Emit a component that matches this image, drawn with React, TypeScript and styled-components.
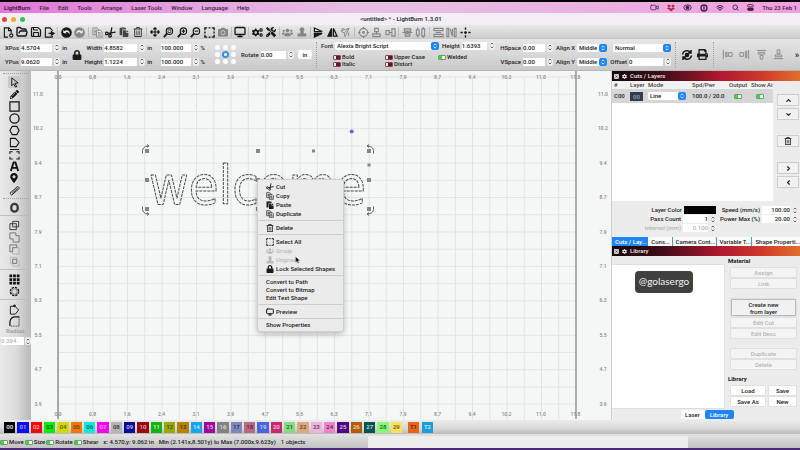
import React, { ReactNode } from "react";
import styled, { createGlobalStyle, css } from "styled-components";
import { ChevronDown, ChevronUp, ChevronLeft, ChevronRight, FolderOpen, Monitor, Save, Search, Video, Wifi } from "lucide-react";
import { FaArrowsAlt, FaCamera, FaCog, FaCogs, FaDropbox, FaLock, FaMapMarkerAlt, FaPaste, FaPencilAlt, FaPrint, FaRegTrashAlt, FaTools, FaUsers } from "react-icons/fa";

const Global = createGlobalStyle`
  * { box-sizing: border-box; }
  html, body, #root { height: 100%; }
  body { margin: 0; background: #e4e4e4; color: #1c1c1c; font: 500 6px/8px Roboto, "Liberation Sans", sans-serif; overflow: hidden; }
  button, input, select { font: inherit; color: inherit; margin: 0; padding: 0; border: 0; min-width: 0; }
  svg { display: block; flex: none; }
`;

const Window = styled.div`
  min-height: 100vh;
  display: flex;
  flex-direction: column;
`;
const MenuBar = styled.nav`
  height: 13px;
  border-top: 2px solid #000;
  padding-left: 4px;
  display: flex;
  align-items: center;
  gap: 9px;
  white-space: nowrap;
  overflow: hidden;
  color: #43203f;
  background: linear-gradient(90deg, #e174d8, #e4a5e0 25%, #e6c0e4 45%, #e8b3e2 70%, #f29fdf);
`;
const MenuLink = styled.button<{ $strong?: boolean }>`
  background: none;
  font-weight: ${(p) => (p.$strong ? 700 : 500)};
`;
const Tray = styled.div`
  margin-left: auto;
  padding-right: 3px;
  display: flex;
  align-items: center;
  gap: 8px;
`;
const TitleBar = styled.header`
  height: 12px;
  display: grid;
  grid-template-columns: 1fr auto 1fr;
  align-items: center;
  padding-left: 2px;
  background: #f3eef5;
  color: #3c3a3e;
  font-weight: 700;
`;
const Lights = styled.div`
  display: flex;
  gap: 4px;
`;
const Light = styled.i<{ $c: string }>`
  width: 5px;
  height: 5px;
  border-radius: 50%;
  background: ${(p) => p.$c};
`;
const ToolBar = styled.div`
  height: 14px;
  background: linear-gradient(#e9e9e9, #d2d2d2 80%, #c6c6c6);
`;
const ToolRow = styled.div`
  width: 59%;
  height: 14px;
  padding-left: 2px;
  display: flex;
  align-items: center;
  justify-content: space-between;
`;
const IconButton = styled.button<{ $dim?: boolean }>`
  width: 13px;
  height: 12px;
  display: grid;
  place-items: center;
  background: none;
  color: ${(p) => (p.$dim ? "#858585" : "#161616")};
`;
const Rule = styled.i`
  width: 1px;
  height: 10px;
  margin: 0 1px;
  background: #bdbdbd;
`;

const Props = styled.div`
  height: 32px;
  display: flex;
  align-items: center;
  padding: 0 1px 0 5px;
  background: linear-gradient(#e6e6e6, #d6d6d6 55%, #c9c9c9);
  border-bottom: 1px solid #b6b6b6;
  white-space: nowrap;
`;
const Pair = styled.div<{ $ml?: number; $w?: number }>`
  display: flex;
  flex-direction: column;
  gap: 6px;
  margin-left: ${(p) => p.$ml ?? 0}px;
  width: ${(p) => (p.$w ? p.$w + "px" : "auto")};
`;
const Field = styled.label<{ $end?: boolean }>`
  display: flex;
  align-items: center;
  justify-content: ${(p) => (p.$end ? "flex-end" : "flex-start")};
  gap: 2px;
  height: 8px;
`;
const Box = styled.input<{ $w: number; $right?: boolean }>`
  width: ${(p) => p.$w}px;
  height: 8px;
  line-height: 8px;
  background: #fff;
  text-align: ${(p) => (p.$right ? "right" : "left")};
  &:disabled { color: #b5b5b5; }
`;
const Spin = styled.span`
  width: 6px;
  height: 8px;
  border-radius: 2px;
  background: #efefef;
  display: grid;
  place-items: center;
`;
const Picker = styled.span<{ $w: number }>`
  position: relative;
  display: flex;
  width: ${(p) => p.$w}px;
  height: 8px;
  background: #fff;
  border-radius: 2px;
  select {
    appearance: none;
    background: none;
    flex: 1;
    padding: 0 8px 0 2px;
    outline: none;
  }
  svg {
    position: absolute;
    right: 0;
    top: 0;
    pointer-events: none;
  }
`;
const Anchors = styled.fieldset`
  margin: 0 0 0 10px;
  padding: 0;
  border: 0;
  display: grid;
  grid-template-columns: repeat(3, 6px);
  gap: 2px 2px;
`;
const Anchor = styled.input`
  appearance: none;
  width: 5px;
  height: 5px;
  border-radius: 50%;
  background: #fbfbfb;
  &:checked { background: #fff; border: 2px solid #2f94dd; width: 7px; height: 7px; margin: -1px; }
`;
const UnitButton = styled.button`
  width: 14px;
  height: 9px;
  margin-left: 4px;
  border-radius: 2px;
  background: #fdfdfd;
`;
const Dots = styled.i<{ $row?: boolean; $m?: number }>`
  ${(p) =>
    p.$row
      ? css`width: 26px; height: 1px; border-top: 1px dotted #a2a2a2;`
      : css`width: 1px; height: 26px; border-left: 1px dotted #a2a2a2;`}
  margin: ${(p) => (p.$row ? "2px 0" : `0 ${p.$m ?? 1}px`)};
  flex: none;
`;
const FontGroup = styled.div`
  width: 176px;
  display: grid;
  row-gap: 4px;
`;
const FontLine = styled.div`
  display: flex;
  align-items: center;
  gap: 3px;
`;
const Checks = styled.div`
  display: grid;
  grid-template-columns: 52px 53px 40px;
  padding-left: 12px;
`;
const ToggleLabel = styled.label`
  display: flex;
  align-items: center;
  gap: 1px;
  height: 7px;
`;
const Toggle = styled.input`
  appearance: none;
  width: 8px;
  height: 5px;
  border: 1px solid #74505a;
  border-radius: 1px;
  background: linear-gradient(90deg, #f3e9eb 38%, #7c0a24 38%);
  &:checked {
    border-color: #6f9a73;
    background: linear-gradient(90deg, #35dc35 58%, #f4fff4 58%);
  }
`;
const More = styled.button`
  margin-left: auto;
  background: none;
  font-size: 9px;
`;

const Body = styled.main`
  flex: 1;
  min-height: 0;
  display: grid;
  grid-template-columns: 31px minmax(0, 1fr) 189px;
`;
const SideTools = styled.aside`
  display: flex;
  flex-direction: column;
  align-items: center;
  background: linear-gradient(90deg, #e9e9e9, #dcdcdc 50%, #b9b9b9);
`;
const SideButton = styled.button<{ $on?: boolean; $dim?: boolean }>`
  width: 13px;
  height: 12px;
  margin-right: 3px;
  flex: none;
  display: grid;
  place-items: center;
  background: ${(p) => (p.$on ? "#c9c9c9" : "none")};
  color: ${(p) => (p.$dim ? "#6e6e6e" : "#111")};
`;
const SideRule = styled.i`
  width: 100%;
  height: 1px;
  margin: 2px 0 3px;
  background: #bdbdbd;
  flex: none;
`;
const Radius = styled.label`
  display: grid;
  gap: 2px;
  width: 100%;
  padding-left: 1px;
  color: #9b9b9b;
  text-align: center;
`;
const RadiusRow = styled.span`
  display: flex;
  gap: 1px;
`;
const CanvasArea = styled.section`
  position: relative;
  background: #f5f7f6;
  overflow: hidden;
`;
const Popup = styled.menu`
  position: absolute;
  left: 227px;
  top: 109px;
  width: 85px;
  margin: 0;
  padding: 2px 0;
  background: #ebebeb;
  border-radius: 2px;
  box-shadow: 0 0 0 1px #cfcfcf, 0 2px 6px #0005;
`;
const PopItem = styled.button<{ $plain?: boolean }>`
  width: 100%;
  height: ${(p) => (p.$plain ? 8 : 9)}px;
  padding-left: 8px;
  display: flex;
  align-items: center;
  gap: 2px;
  background: none;
  white-space: nowrap;
  &:disabled { color: #b9b9b9; }
`;
const PopRule = styled.hr`
  height: 1px;
  margin: 2px 0;
  border: 0;
  background: #cdcdcd;
`;
const Pointer = styled.div`
  position: absolute;
  left: 264px;
  top: 185px;
`;

const Dock = styled.aside`
  display: flex;
  flex-direction: column;
  background: #ececec;
  border-left: 1px solid #cfcfcf;
  min-width: 0;
`;
const DockTitle = styled.h2`
  margin: 0;
  height: 10px;
  padding-left: 2px;
  display: flex;
  align-items: center;
  gap: 3px;
  flex: none;
  color: #f3e6e6;
  font: inherit;
  background: linear-gradient(90deg, #15090c, #3a0c16 25%, #b0192f 58%, #cf3a2b 80%, #e0702c);
`;
const Cuts = styled.div`
  display: grid;
  grid-template-columns: 1fr 22px;
  gap: 4px;
  height: 120px;
  padding-right: 1px;
`;
const TableWrap = styled.div`
  background: #fff;
  overflow: hidden;
`;
const Table = styled.table`
  width: 100%;
  table-layout: fixed;
  border-collapse: collapse;
  th { height: 8px; padding: 0; text-align: left; font-weight: 500; background: #f2f2f2; color: #444; white-space: nowrap; }
  td { height: 14px; padding: 0; background: #d6d6d6; white-space: nowrap; }
  td input { margin-left: 5px; vertical-align: middle; }
  th:first-child, td:first-child { padding-left: 2px; }
`;
const LayerChip = styled.span`
  display: block;
  width: 13px;
  height: 9px;
  line-height: 9px;
  text-align: center;
  background: #323e4c;
  color: #93a0ad;
`;
const Arrows = styled.div`
  padding-top: 13px;
  display: flex;
  flex-direction: column;
  gap: 2px;
`;
const ArrowButton = styled.button<{ $gap?: boolean }>`
  height: 12px;
  margin-top: ${(p) => (p.$gap ? 13 : 0)}px;
  display: grid;
  place-items: center;
  background: #f1f1f1;
  border: 1px solid #cdcdcd;
`;
const Settings = styled.div`
  display: grid;
  grid-template-columns: 104px 1fr;
  gap: 1px 0;
  padding: 5px 2px 5px 0;
`;
const Swatch = styled.span`
  width: 32px;
  height: 8px;
  background: #000;
`;
const Muted = styled.span`
  color: #b5b5b5;
`;
const Tabs = styled.div`
  display: flex;
  height: 9px;
  overflow: hidden;
  flex: none;
  white-space: nowrap;
`;
const Tab = styled.button<{ $on?: boolean }>`
  padding: 0 3px;
  flex: auto;
  background: ${(p) => (p.$on ? "#1d86f2" : "#fafafa")};
  color: ${(p) => (p.$on ? "#fff" : "#222")};
  border-right: 1px solid ${(p) => (p.$on ? "#1d86f2" : "#4a98dc")};
  &:last-child { border: 0; }
`;
const LibraryBody = styled.div`
  flex: 1;
  display: grid;
  grid-template-columns: 113px 1fr;
  gap: 6px;
  padding-right: 4px;
`;
const Shelf = styled.div`
  margin-top: 8px;
  padding: 6px 0 0 23px;
  background: #fff;
  border: 1px solid #dedede;
  border-left: 0;
`;
const Handle = styled.div`
  width: 58px;
  height: 22px;
  line-height: 21px;
  text-align: center;
  border-radius: 4px;
  background: #404040;
  color: #f2f2f2;
  font-family: Lato, sans-serif;
  font-size: 10px;
  font-weight: 400;
`;
const Actions = styled.div`
  display: flex;
  flex-direction: column;
  gap: 2px;
`;
const Heading = styled.h3<{ $gap?: boolean }>`
  margin: ${(p) => (p.$gap ? 4 : 1)}px 0 1px -3px;
  font: inherit;
  font-weight: 700;
`;
const Action = styled.button<{ $gap?: boolean; $tall?: boolean }>`
  height: ${(p) => (p.$tall ? 17 : 9)}px;
  line-height: 7px;
  margin-top: ${(p) => (p.$gap ? 9 : 0)}px;
  border-radius: 1px;
  background: #fefefe;
  box-shadow: 0 0 0 1px #0000000d;
  ${(p) => p.$tall && css`background: #f1f1f1; border: 1px solid #b9b9b9;`}
  &:disabled { color: #b4b4b4; background: #f4f4f4; }
`;
const ActionPair = styled.div`
  display: grid;
  grid-template-columns: 34px 1fr;
  gap: 4px;
`;
const BottomTabs = styled.div`
  height: 10px;
  display: flex;
  justify-content: center;
  margin: 1px 0 0 2px;
`;
const BottomTab = styled.button<{ $on?: boolean }>`
  width: ${(p) => (p.$on ? 29 : 24)}px;
  height: 9px;
  border-radius: 2px;
  background: ${(p) => (p.$on ? "#1d86f2" : "#fff")};
  color: ${(p) => (p.$on ? "#fff" : "#222")};
`;

const Palette = styled.div`
  height: 14px;
  display: flex;
  align-items: center;
  gap: 6px;
  padding-left: 4px;
  background: linear-gradient(#ececec, #d8d8d8 60%, #b9b9b9);
`;
const Colours = styled.div`
  width: 50%;
  display: grid;
  grid-template-columns: repeat(30, 1fr);
  gap: 2px;
`;
const Tools = styled.div`
  display: grid;
  grid-template-columns: 11px 11px;
  gap: 3px;
`;
const Colour = styled.button<{ $bg: string; $fg: string }>`
  height: 11px;
  background: ${(p) => p.$bg};
  color: ${(p) => p.$fg};
`;
const Status = styled.footer`
  height: 16px;
  padding: 2px 0 0;
  display: grid;
  grid-template-columns: 46% 40% 1fr;
  background: linear-gradient(#e2e2e2, #c2c2c2);
  border-bottom: 2px solid #4b2a78;
  white-space: nowrap;
`;
const StatusLeft = styled.div`
  display: flex;
  align-items: center;
  gap: 1px;
`;
const Readout = styled.output`
  margin-left: 4px;
`;
const Progress = styled.div`
  background: #ededed;
`;

const G = ({ s = 11, w = 2.4, fill = "none", children }: { s?: number; w?: number; fill?: string; children: ReactNode }) => (
  <svg width={s} height={s} viewBox="0 0 24 24" fill={fill} stroke="currentColor" strokeWidth={w} aria-hidden="true">
    {children}
  </svg>
);
const Spinner = () => (
  <Spin aria-hidden="true">
    <svg width="4" height="7" viewBox="0 0 4 7" fill="none" stroke="#444" strokeWidth=".8">
      <path d="M.6 2.4 2 1l1.4 1.4M.6 4.6 2 6l1.4-1.4" />
    </svg>
  </Spin>
);
const Drop = ({ label, value, w }: { label: string; value: string; w: number }) => (
  <Picker $w={w}>
    <select aria-label={label} defaultValue={value}>
      <option>{value}</option>
    </select>
    <svg width="8" height="8" viewBox="0 0 8 8">
      <rect width="8" height="8" rx="2" fill="#1d86f2" />
      <path d="M2.6 3.2 4 1.9l1.4 1.3M2.6 4.8 4 6.1l1.4-1.3" fill="none" stroke="#fff" strokeWidth=".8" />
    </svg>
  </Picker>
);
const Num = ({ label, value, w, unit, end }: { label?: string; value: string; w: number; unit?: string; end?: boolean }) => (
  <Field $end={end}>
    {label}
    <Box $w={w} defaultValue={value} aria-label={label ?? "Scale"} />
    <Spinner />
    {unit}
  </Field>
);
const Check = ({ label, on }: { label: string; on?: boolean }) => (
  <ToggleLabel>
    <Toggle type="checkbox" defaultChecked={on} />
    {label}
  </ToggleLabel>
);

const CopyIcon = ({ s = 11 }: { s?: number }) => (
  <G s={s} w={2}>
    <path d="M2 2h9l3 3v12H2zM5 7h5M5 10h5M5 13h3" />
    <path d="M10 7h8l4 4v11H10z" fill="#e4e4e4" />
    <path d="M13 12h5M13 15h6M13 18h6" />
  </G>
);
const CutIcon = ({ s = 11 }: { s?: number }) => (
  <G s={s} w={2.8}>
    <path d="M15 1l-3 15M23 11 7 14" />
    <circle cx="11" cy="19" r="2.8" />
    <circle cx="4" cy="14" r="2.8" />
  </G>
);
const SelectIcon = ({ s = 11 }: { s?: number }) => (
  <G s={s} w={3}>
    <path d="M2 7V2h5M10 2h4M17 2h5v5M22 10v4M22 17v5h-5M14 22h-4M7 22H2v-5M2 14v-4" />
  </G>
);
const StampIcon = ({ s = 10 }: { s?: number }) => (
  <G s={s} w={1} fill="currentColor">
    <circle cx="12" cy="6" r="5" />
    <path d="M9 9h6l1 7h6v6H2v-6h6z" />
  </G>
);
const Lens = ({ children }: { children: ReactNode }) => (
  <G>
    <circle cx="14" cy="9" r="7" />
    <path d="M9 14l-7 8" strokeWidth="4" />
    {children}
  </G>
);

const toolGroups: { dim?: boolean; icon: ReactNode }[][] = [
  [
    { icon: <G><path d="M11 22H3V2h10l5 5v6M12 2v6h6" /><circle cx="18" cy="18.5" r="3.5" /></G> },
    { icon: <FolderOpen size={12} strokeWidth={2.8} /> },
    { icon: <Save size={12} strokeWidth={2.4} /> },
    { icon: <G><path d="M18 8V7l-5-5H3v20h15v-3M10 14h7" /><path d="M16 10l6 4-6 4z" fill="currentColor" /></G> },
  ],
  [
    { icon: <G w={0} fill="currentColor"><circle cx="12" cy="12" r="11.5" /><path d="M5 13V6l3 3q5-4 10 1 2 3 0 6-2-5-5-5-2 0-3 1l2 2z" fill="#eee" /></G> },
    { dim: true, icon: <G w={0} fill="currentColor"><circle cx="12" cy="12" r="11.5" /><path d="M19 13V6l-3 3q-5-4-10 1-2 3 0 6 2-5 5-5 2 0 3 1l-2 2z" fill="#eee" /></G> },
  ],
  [
    { dim: true, icon: <CopyIcon /> },
    { icon: <CutIcon /> },
    { icon: <FaPaste size={10} color="#444" /> },
    { icon: <FaRegTrashAlt size={10} color="#333" /> },
  ],
  [
    { icon: <FaArrowsAlt size={10} /> },
    { icon: <Lens><path d="M11 6h6v6h-6z" strokeWidth="1.5" /></Lens> },
    { icon: <Lens><path d="M10 9h8M14 5v8" /></Lens> },
    { icon: <Lens><path d="M10 9h8" /></Lens> },
    { icon: <SelectIcon /> },
    { dim: true, icon: <FaCamera size={10} /> },
  ],
  [{ icon: <Monitor size={12} strokeWidth={2.6} /> }],
  [{ icon: <FaCogs size={11} /> }, { icon: <FaTools size={10} /> }],
  [{ dim: true, icon: <FaUsers size={11} /> }, { dim: true, icon: <StampIcon /> }],
  [
    { icon: <G w={2.6}><path d="M3 2l17 8H3z" /><path d="M3 22v-8h17z" fill="currentColor" /></G> },
    { icon: <G w={2.6}><path d="M10 3v17H2z" fill="currentColor" /><path d="M14 3v17h8z" /></G> },
    { dim: true, icon: <G w={2}><path d="M2 8l18-5-9 18-2-8zM9 13 20 3M3 4h6M19 12v8" /></G> },
  ],
  [
    { dim: true, icon: <G><circle cx="12" cy="12" r="9" /><circle cx="12" cy="12" r="2" /><path d="M12 0v5M12 19v5M0 12h5M19 12h5" /></G> },
    { dim: true, icon: <G><path d="M8 3h8v7H8zM4 15h16v6H4zM12 10v5" /></G> },
    { dim: true, icon: <G><path d="M2 8h7v9H2zM15 4h7v16h-7zM9 12h6" /></G> },
  ],
  [
    { dim: true, icon: <G><path d="M5 4h14v5H5zM7 15h10v5H7zM1 12h22M12 9v6" /></G> },
    { dim: true, icon: <G><path d="M3 6h6v12H3zM15 4h6v16h-6zM6 1v5M6 18v5M18 0v4M18 20v4" /></G> },
  ],
  [
    { dim: true, icon: <G><path d="M2 3h20v5H2zM6 12h12M2 16h20v5H2z" /></G> },
    { dim: true, icon: <G><path d="M2 3h4v18H2zM18 3h4v18h-4zM9 4l5 16M14 4v16" /></G> },
    { icon: <G w={3}><path d="M12 1v5M12 18v5M1 12h5M18 12h5M9 12h6M12 9v6" /></G> },
  ],
];

const sideTools: (ReactNode | "dots" | "rule")[] = [
  "dots",
  <G key="a" w={2}><path d="M6 2l14 11-7 1 4 7-3 1-4-7-4 4z" /></G>,
  <FaPencilAlt key="b" size={9} />,
  <G key="c" w={2.6}><path d="M2 2h20v20H2z" /></G>,
  <G key="d" w={2.8}><circle cx="12" cy="12" r="10" /></G>,
  <G key="e" w={2.4}><path d="M7 3h10l5 9-5 9H7l-5-9z" /></G>,
  <G key="f" w={2.2}><path d="M3 3h11l8 9-6 9H3z" /></G>,
  <G key="g" w={2.2}><path d="M2 1h20M8 6H2v5M16 6h6v5M2 17v5h6M22 17v5h-6" /></G>,
  <G key="h" w={4}><path d="M4 22 10 3h4l6 19M8 15h8" /></G>,
  <FaMapMarkerAlt key="i" size={10} />,
  <G key="j" w={2}><path d="M2 18 19 3l4 4L6 22zM7 18l12-11" /></G>,
  "dots",
  <G key="k" w={5}><rect x="5" y="4" width="14" height="17" rx="7" stroke="#3a3a3a" /></G>,
  "rule",
  <G key="l" w={2}><path d="M2 8h6V3h13v12h-5v6H2zM8 8v7h8M8 8h8v7" stroke="#333" /></G>,
  <G key="m" w={2}><path d="M2 2h13v6h7v14H9v-7H2z" /></G>,
  <G key="n" w={2}><path d="M2 2h15v6H8v9H2z" /><path d="M17 8h5v14H8v-5" opacity=".35" /></G>,
  <G key="o" w={2}><path d="M8 7h9v9H8z" /><path d="M3 3h14v4M22 9v13H8v-6M3 3v13h5" opacity=".35" /></G>,
  "rule",
  <G key="p" w={0} fill="currentColor"><path d="M1 1h6v6H1zM9 1h6v6H9zM17 1h6v6h-6zM1 9h6v6H1zM9 9h6v6H9zM17 9h6v6h-6zM1 17h6v6H1zM9 17h6v6H9zM17 17h6v6h-6z" /></G>,
  <G key="q" w={3}><circle cx="12" cy="12" r="9" strokeDasharray="5 2" /><circle cx="12" cy="12" r="6" strokeWidth="1" /></G>,
  "rule",
  <G key="r" w={2}><path d="M3 5h10l8 8-7 9H3z" /><circle cx="12" cy="4" r="2" fill="currentColor" /></G>,
  <G key="s" w={2}><path d="M2 22V13Q3 2 14 2h8" strokeWidth="2.6" /><path d="M22 2v20H2" strokeDasharray="2 2" /></G>,
];

const xLabels = ["0.0", "0.8", "1.6", "2.4", "3.1", "3.9", "4.7", "5.5", "6.3", "7.1", "7.9", "8.7", "9.4", "10.2", "11.0", "11.8"];
const yLabels = ["11.0", "10.2", "9.4", "8.7", "7.9", "7.1", "6.3", "5.5", "4.7", "3.9"];
const range = (n: number) => Array.from({ length: n }, (_, i) => i);
const STEP = 17.25;

const Label = styled.text`
  font: 500 5px Roboto, sans-serif;
  fill: #858585;
  text-anchor: middle;
`;
const Lettering = styled.text`
  font: 400 54px "DejaVu Sans Condensed", "DejaVu Sans", sans-serif;
  fill: none;
  stroke: #4b4b4b;
  stroke-width: 1px;
  stroke-dasharray: 3 1;
  stroke-linejoin: round;
`;

const Workspace = () => (
  <svg width="580" height="349" viewBox="31 71 580 349" role="img" aria-label="Workspace">
    <g stroke="#e1e4e0" strokeWidth="1">
      {range(30).map((i) => (
        <path key={i} d={`M${58.5 + i * STEP} 77V420`} />
      ))}
      {range(20).map((i) => (
        <path key={i} d={`M58 ${77 + i * 17.22}H576`} />
      ))}
    </g>
    <path d="M58 71V419M576 71V419" stroke="#818584" strokeWidth="1.3" />
    {xLabels.map((t, i) => (
      <g key={t}>
        <Label x={58 + i * 34.5} y="79">{t}</Label>
        <Label x={58 + i * 34.5} y="416">{t}</Label>
      </g>
    ))}
    {yLabels.map((t, i) => (
      <g key={t}>
        <Label x="38" y={96 + i * 34.4}>{t}</Label>
        <Label x="603" y={96 + i * 34.4}>{t}</Label>
      </g>
    ))}
    <Lettering x="149" y="204">welcome</Lettering>
    <g fill="#858585">
      {[[147, 151], [258, 151], [369, 151], [147, 180], [258, 180], [369, 180], [147, 209], [258, 209], [369, 209]].map(([x, y]) => (
        <rect key={`${x}-${y}`} x={x - 2} y={y - 2} width="4" height="4" />
      ))}
      <rect x="312" y="149.5" width="3" height="3" />
      <rect x="367.5" y="163.5" width="3" height="3" />
    </g>
    <circle cx="351.7" cy="131.5" r="2" fill="#6a66dd" />
    <g fill="none" stroke="#5f5f5f" strokeWidth="1">
      <path d="M142.5 153.5q-1-7 5.5-7.5M373.5 153.5q1-7-5.5-7.5M142.5 206.5q-1 7 5.5 7.5M373.5 206.5q1 7-5.5 7.5" />
      <path d="M147 144.5l2 1.5-2 1.5M369 144.5l-2 1.5 2 1.5M147 212.5l2 1.5-2 1.5M369 212.5l-2 1.5 2 1.5" />
    </g>
  </svg>
);

const menuItems: ({ t: string; icon?: ReactNode; off?: boolean } | null)[] = [
  { t: "Cut", icon: <CutIcon s={8} /> },
  { t: "Copy", icon: <CopyIcon s={8} /> },
  { t: "Paste", icon: <FaPaste size={8} /> },
  { t: "Duplicate", icon: <CopyIcon s={8} /> },
  null,
  { t: "Delete", icon: <FaRegTrashAlt size={8} /> },
  null,
  { t: "Select All", icon: <SelectIcon s={8} /> },
  { t: "Group", icon: <FaUsers size={8} />, off: true },
  { t: "Ungroup", icon: <StampIcon s={8} />, off: true },
  { t: "Lock Selected Shapes", icon: <FaLock size={8} /> },
  null,
  { t: "Convert to Path" },
  { t: "Convert to Bitmap" },
  { t: "Edit Text Shape" },
  null,
  { t: "Preview", icon: <Monitor size={8} strokeWidth={3} /> },
  null,
  { t: "Show Properties" },
];

const W = "#f4f4f4";
const colours: [string, string][] = [
  ["#000000", W], ["#0a10f0", "#b9bcff"], ["#e80c12", "#ffb0a8"], ["#12e80e", "#0b5c0b"], ["#d2d808", "#55580a"], ["#ee7a0c", "#6b3506"],
  ["#10e8dc", "#075a55"], ["#ee0cec", "#ffa5ff"], ["#b4b4b4", "#333"], ["#0a0c96", "#c2c4ff"], ["#960a10", "#ffb9b9"], ["#12b412", "#c6ffc6"],
  ["#9ba80c", "#3c4106"], ["#b4820c", "#4a3404"], ["#16a4ea", "#cfefff"], ["#9a0a9c", "#ffc2ff"], ["#828282", "#e2e2e2"], ["#7c88b8", "#22294a"],
  ["#b86a84", "#4b1c2d"], ["#4a64dc", "#cfd7ff"], ["#c42a70", "#ffc9df"], ["#84dc84", "#1d541d"], ["#dcaa82", "#5b3a1c"], ["#ecb6dc", "#5f3351"],
  ["#ec84cc", "#5c1e49"], ["#4c0a80", "#e4c9ff"], ["#b05c0c", "#ffdcb4"], ["#0a5250", "#c8eeec"], ["#86fa76", "#22581c"], ["#fae060", "#5e500f"],
];

const DockHeader = ({ children }: { children: ReactNode }) => (
  <DockTitle>
    <G s={5} w={3}><rect x="2" y="2" width="20" height="20" fill="#ddd" /><path d="M7 7l10 10M17 7 7 17" stroke="#222" /></G>
    <FaCog size={5} />
    {children}
  </DockTitle>
);

export default function App() {
  return (
    <>
      <Global />
      <Window>
        <MenuBar>
          {["LightBurn", "File", "Edit", "Tools", "Arrange", "Laser Tools", "Window", "Language", "Help"].map((t, i) => (
            <MenuLink key={t} $strong={i === 0}>{t}</MenuLink>
          ))}
          <Tray>
            <Video size={9} />
            <FaDropbox size={8} color="#b3243c" />
            <G s={9}><ellipse cx="12" cy="12" rx="10" ry="7" /><circle cx="12" cy="12" r="4" fill="currentColor" /></G>
            <G s={8} w={4}><circle cx="12" cy="12" r="9" /><path d="M12 7v10" /></G>
            <Wifi size={8} strokeWidth={3} />
            <Search size={7} strokeWidth={3} />
            <G s={7} w={3}><rect x="2" y="2" width="20" height="8" rx="4" /><rect x="2" y="14" width="20" height="8" rx="4" fill="currentColor" /></G>
            <span>Thu 23 Feb 1</span>
          </Tray>
        </MenuBar>
        <TitleBar>
          <Lights>
            <Light $c="#e0443e" />
            <Light $c="#f0a92e" />
            <Light $c="#2fc840" />
          </Lights>
          <span>&lt;untitled&gt; * - LightBurn 1.3.01</span>
        </TitleBar>
        <ToolBar>
          <ToolRow>
            {toolGroups.map((g, i) => (
              <React.Fragment key={i}>
                {i > 0 && <Rule />}
                {g.map((b, j) => (
                  <IconButton key={j} $dim={b.dim} aria-label={`Tool ${i + 1}.${j + 1}`}>{b.icon}</IconButton>
                ))}
              </React.Fragment>
            ))}
          </ToolRow>
        </ToolBar>
        <Props>
          <Pair $w={62}>
            <Num label="XPos" value="4.5704" w={32} unit="in" end />
            <Num label="YPos" value="9.0620" w={32} unit="in" end />
          </Pair>
          <Pair $ml={5} $w={11}><FaLock size={10} /></Pair>
          <Pair $ml={1} $w={68}>
            <Num label="Width" value="4.8582" w={33} unit="in" end />
            <Num label="Height" value="1.1224" w={33} unit="in" end />
          </Pair>
          <Pair $ml={9} $w={44}>
            <Num value="100.000" w={30} unit="%" />
            <Num value="100.000" w={30} unit="%" />
          </Pair>
          <Anchors aria-label="Anchor">
            {range(9).map((i) => (
              <Anchor key={i} type="radio" name="anchor" defaultChecked={i === 4} aria-label={`Anchor ${i + 1}`} />
            ))}
          </Anchors>
          <Pair $ml={4} $w={53}><Num label="Rotate" value="0.00" w={26} /></Pair>
          <UnitButton>in</UnitButton>
          <Dots $m={4} />
          <FontGroup>
            <FontLine>
              <Field>Font<Drop label="Font" value="Alexia Bright Script" w={104} /></Field>
              <Num label="Height" value="1.6393" w={25} />
            </FontLine>
            <Checks>
              <Check label="Bold" />
              <Check label="Upper Case" />
              <Check label="Welded" on />
              <Check label="Italic" />
              <Check label="Distort" />
            </Checks>
          </FontGroup>
          <Pair $ml={3} $w={53}>
            <Num label="HSpace" value="0.00" w={22} end />
            <Num label="VSpace" value="0.00" w={22} end />
          </Pair>
          <Pair $ml={1} $w={53}>
            <Field $end>Align X<Drop label="Align X" value="Middle" w={30} /></Field>
            <Field $end>Align Y<Drop label="Align Y" value="Middle" w={30} /></Field>
          </Pair>
          <Pair $ml={3} $w={61}>
            <Field $end><Drop label="Mode" value="Normal" w={58} /></Field>
            <Num label="Offset" value="0" w={34} end />
          </Pair>
          <Dots $m={4} />
          <IconButton aria-label="Refresh"><G s={12} w={3}><path d="M3 11a9 9 0 0 1 16-4M21 13a9 9 0 0 1-16 4M20 2v6h-6M4 22v-6h6" /><circle cx="12" cy="12" r="3" fill="currentColor" /></G></IconButton>
          <Pair $ml={4} $w={13}><FaPrint size={11} /></Pair>
          <Dots $m={3} />
          {["M3 2v20M8 7h3v10H8zM14 8h8v8h-8z", "M21 2v20M2 8h8v8H2zM14 5h3v14h-3z", "M2 3h20M5 7h14v4H5zM9 14h6v8H9z", "M2 21h20M5 13h14v4H5zM9 2h6v8H9z"].map((d) => (
            <Pair key={d} $ml={4}><IconButton $dim aria-label="Align"><G w={2}><path d={d} /></G></IconButton></Pair>
          ))}
          <More aria-label="More">»</More>
        </Props>
        <Body>
          <SideTools>
            {sideTools.map((t, i) =>
              t === "dots" ? <Dots key={i} $row /> : t === "rule" ? <SideRule key={i} /> : (
                <SideButton key={i} $on={i === 1} $dim={i > 13 && i < 18} aria-label={`Draw ${i}`}>{t}</SideButton>
              )
            )}
            <Radius>
              Radius:
              <RadiusRow><Box $w={23} defaultValue="0.394" disabled /><Spinner /></RadiusRow>
            </Radius>
          </SideTools>
          <CanvasArea>
            <Workspace />
            <Popup>
              {menuItems.map((m, i) =>
                m ? <PopItem key={m.t} $plain={!m.icon} disabled={m.off}>{m.icon}{m.t}</PopItem> : <PopRule key={i} />
              )}
            </Popup>
            <Pointer>
              <svg width="6" height="8" viewBox="0 0 6 8"><path d="M.5.5v6l1.5-1.3L3 7.500l1-.5-1-2.200h2z" fill="#111" stroke="#fff" strokeWidth=".3" /></svg>
            </Pointer>
          </CanvasArea>
          <Dock>
            <DockHeader>Cuts / Layers</DockHeader>
            <Cuts>
              <TableWrap>
                <Table>
                  <colgroup><col width="18" /><col width="18" /><col width="44" /><col width="37" /><col width="22" /><col width="16" /><col /></colgroup>
                  <thead><tr><th>#</th><th>Layer</th><th>Mode</th><th>Spd/Pwr</th><th>Output</th><th>Show</th><th>Ai</th></tr></thead>
                  <tbody>
                    <tr>
                      <td>C00</td>
                      <td><LayerChip>00</LayerChip></td>
                      <td><Drop label="Mode" value="Line" w={38} /></td>
                      <td>100.0 / 20.0</td>
                      <td><Toggle type="checkbox" defaultChecked aria-label="Output" /></td>
                      <td><Toggle type="checkbox" defaultChecked aria-label="Show" /></td>
                      <td />
                    </tr>
                  </tbody>
                </Table>
              </TableWrap>
              <Arrows>
                <ArrowButton aria-label="Up"><ChevronUp size={7} strokeWidth={4} /></ArrowButton>
                <ArrowButton aria-label="Down"><ChevronDown size={7} strokeWidth={4} /></ArrowButton>
                <ArrowButton $gap aria-label="Delete"><FaRegTrashAlt size={8} /></ArrowButton>
                <ArrowButton $gap aria-label="Right"><ChevronRight size={7} strokeWidth={4} /></ArrowButton>
                <ArrowButton aria-label="Left"><ChevronLeft size={7} strokeWidth={4} /></ArrowButton>
              </Arrows>
            </Cuts>
            <Settings>
              <Field $end>Layer Color <Swatch /></Field>
              <Field $end>Speed (mm/s) <Box $w={28} $right defaultValue="100.00" /><Spinner /></Field>
              <Field $end>Pass Count <Box $w={25} $right defaultValue="1" /><Spinner /></Field>
              <Field $end>Power Max (%) <Box $w={28} $right defaultValue="20.00" /><Spinner /></Field>
              <Field $end><Muted>Interval (mm)</Muted> <Box $w={25} $right defaultValue="0.100" disabled /><Spinner /></Field>
            </Settings>
            <Tabs>
              <Tab $on>Cuts / Lay...</Tab><Tab>Cons...</Tab><Tab>Camera Cont...</Tab><Tab>Variable T...</Tab><Tab>Shape Properti...</Tab>
            </Tabs>
            <DockHeader>Library</DockHeader>
            <LibraryBody>
              <Shelf><Handle>@golasergo</Handle></Shelf>
              <Actions>
                <Heading>Material</Heading>
                <Action disabled>Assign</Action>
                <Action disabled>Link</Action>
                <Action $tall $gap>Create new<br />from layer</Action>
                <Action disabled>Edit Cut</Action>
                <Action disabled>Edit Desc</Action>
                <Action disabled $gap>Duplicate</Action>
                <Action disabled>Delete</Action>
                <Heading $gap>Library</Heading>
                <ActionPair><Action>Load</Action><Action>Save</Action></ActionPair>
                <ActionPair><Action>Save As</Action><Action>New</Action></ActionPair>
              </Actions>
            </LibraryBody>
            <BottomTabs><BottomTab>Laser</BottomTab><BottomTab $on>Library</BottomTab></BottomTabs>
          </Dock>
        </Body>
        <Palette>
          <Colours>
            {colours.map(([bg, fg], i) => (
              <Colour key={i} $bg={bg} $fg={fg}>{String(i).padStart(2, "0")}</Colour>
            ))}
          </Colours>
          <Tools>
            <Colour $bg="#e8641c" $fg="#5c1c08">T1</Colour>
            <Colour $bg="#1c9cd8" $fg="#d8f2ff">T2</Colour>
          </Tools>
        </Palette>
        <Status>
          <StatusLeft>
            <Check label="Move" on /><Check label="Size" on /><Check label="Rotate" on /><Check label="Shear" on />
            <Readout>x: 4.570,y: 9.062 in</Readout>
            <Readout>Min (2.141x,8.501y) to Max (7.000x,9.623y)</Readout>
            <Readout>1 objects</Readout>
          </StatusLeft>
          <Progress />
        </Status>
      </Window>
    </>
  );
}
